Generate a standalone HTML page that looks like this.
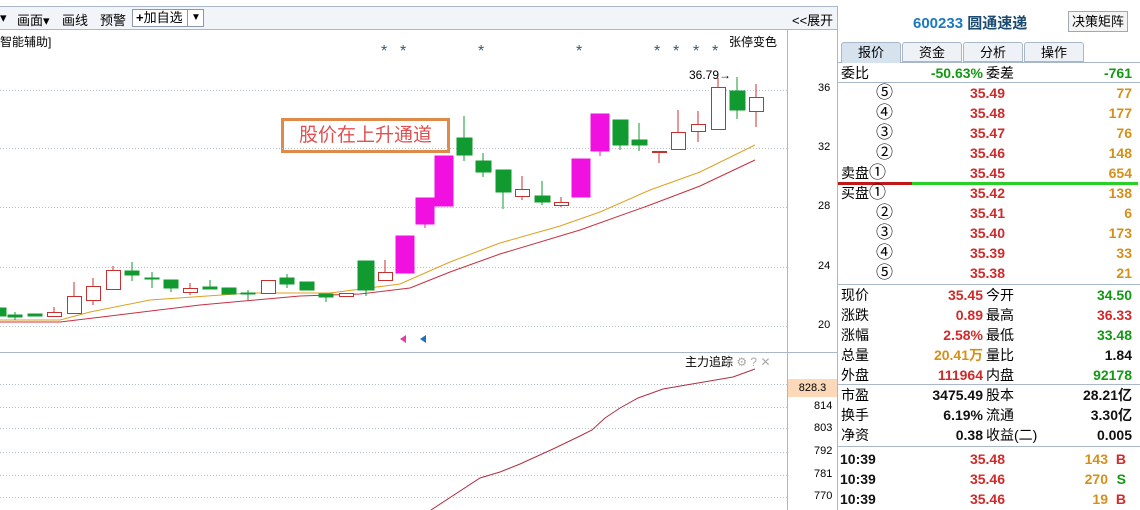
<!DOCTYPE html>
<html><head><meta charset="utf-8"><style>
*{margin:0;padding:0;box-sizing:border-box}
body{width:1140px;height:510px;overflow:hidden;background:#fff;font-family:"Liberation Sans","Noto Sans CJK SC",sans-serif;font-size:13px;color:#000;position:relative}
.a{position:absolute;white-space:nowrap}
.r{color:#d02a2a;font-weight:bold}
.g{color:#119911;font-weight:bold}
.o{color:#d4901a;font-weight:bold}
.k{color:#111;font-weight:bold}
.row{position:absolute;left:838px;width:300px;height:20px;line-height:20px;font-size:14px}
.row span{position:absolute}
.c{font-size:17px;line-height:20px}
.st{font-size:16px;color:#3a5a70}
</style></head><body>
<div class="a" style="left:0;top:6px;width:838px;height:24px;background:#f1f4f8;border-top:1px solid #a9b8c8;border-bottom:1px solid #a9b8c8"></div>
<div class="a" style="left:0;top:10px;font-size:13px">▾</div>
<div class="a" style="left:17px;top:10px;font-size:13px">画面▾</div>
<div class="a" style="left:62px;top:10px;font-size:13px">画线</div>
<div class="a" style="left:100px;top:10px;font-size:13px">预警</div>
<div class="a" style="left:132px;top:9px;width:72px;height:18px;border:1px solid #8a9aac;background:#fff;font-size:13px;line-height:16px;padding-left:3px"><b>+</b>加自选<span style="position:absolute;left:54px;top:0;height:16px;border-left:1px solid #8a9aac;width:17px;text-align:center;font-size:10px">▼</span></div>
<div class="a" style="left:792px;top:10px;font-size:13px">&lt;&lt;展开</div>
<div class="a" style="left:787px;top:30px;width:1px;height:480px;background:#a9b8c8"></div>
<div class="a" style="left:0;top:352px;width:838px;height:1px;background:#a9b8c8"></div>
<div class="a" style="left:0;top:33px;font-size:12px">智能辅助]</div>
<div class="a" style="left:729px;top:33px;font-size:12px">张停变色</div>
<div class="a st" style="left:381px;top:43px">*</div><div class="a st" style="left:400px;top:43px">*</div>
<div class="a st" style="left:478px;top:43px">*</div>
<div class="a st" style="left:576px;top:43px">*</div>
<div class="a st" style="left:654px;top:43px">*</div><div class="a st" style="left:673px;top:43px">*</div><div class="a st" style="left:693px;top:43px">*</div><div class="a st" style="left:712px;top:43px">*</div>
<div class="a" style="left:689px;top:68px;font-size:12px">36.79→</div>
<div class="a" style="left:281px;top:118px;width:169px;height:35px;border:3px solid #e08a4a;color:#e05050;font-size:19px;line-height:29px;text-align:center">股价在上升通道</div>
<div class="a" style="left:685px;top:353px;font-size:12px">主力追踪 <span style="color:#aaa">⚙ ? ✕</span></div>
<div class="a" style="left:818px;top:82px;font-size:11px">36</div>
<div class="a" style="left:818px;top:141px;font-size:11px">32</div>
<div class="a" style="left:818px;top:200px;font-size:11px">28</div>
<div class="a" style="left:818px;top:260px;font-size:11px">24</div>
<div class="a" style="left:818px;top:319px;font-size:11px">20</div>
<div class="a" style="left:788px;top:379px;width:49px;height:18px;background:#fbd9b8;font-size:11px;line-height:18px;text-align:center">828.3</div>
<div class="a" style="left:814px;top:400px;font-size:11px">814</div>
<div class="a" style="left:814px;top:422px;font-size:11px">803</div>
<div class="a" style="left:814px;top:445px;font-size:11px">792</div>
<div class="a" style="left:814px;top:468px;font-size:11px">781</div>
<div class="a" style="left:814px;top:490px;font-size:11px">770</div>
<svg class="a" style="left:0;top:0" width="838" height="510">
<g stroke="#b8c4cc" stroke-dasharray="1 2" stroke-width="1">
<line x1="0" y1="90.5" x2="787" y2="90.5"/><line x1="0" y1="148.5" x2="787" y2="148.5"/><line x1="0" y1="207.5" x2="787" y2="207.5"/><line x1="0" y1="267.5" x2="787" y2="267.5"/><line x1="0" y1="326.5" x2="787" y2="326.5"/>
<line x1="0" y1="384.5" x2="787" y2="384.5"/><line x1="0" y1="407.5" x2="787" y2="407.5"/><line x1="0" y1="428.5" x2="787" y2="428.5"/><line x1="0" y1="452.5" x2="787" y2="452.5"/><line x1="0" y1="475.5" x2="787" y2="475.5"/><line x1="0" y1="497.5" x2="787" y2="497.5"/>
</g>
<polyline fill="none" stroke="#e0a020" stroke-width="1" points="0,320 60,320 90,312 150,300 250,293 330,293 400,284 450,262 500,243 560,226 600,212 650,190 700,172 755,145"/>
<polyline fill="none" stroke="#c83040" stroke-width="1" points="0,322 60,322 110,316 200,305 300,296 360,294 410,288 450,272 500,254 580,230 650,205 700,186 755,160"/>
<polyline fill="none" stroke="#b03040" stroke-width="1" points="431,510 480,478 500,472 520,464 553,449 580,436 592,430 605,418 620,408 638,398 663,389 692,384 733,377 755,369"/>
<g stroke-width="1">
<g fill="#109a30" stroke="#109a30">
<rect x="-4" y="308" width="10" height="8"/>
<line x1="15" y1="312" x2="15" y2="320"/><rect x="8" y="315" width="14" height="2"/>
<rect x="28" y="314" width="14" height="2"/>
<line x1="132" y1="262" x2="132" y2="281"/><rect x="125" y="271" width="14" height="4"/>
<line x1="152" y1="272" x2="152" y2="288"/><rect x="145" y="278" width="14" height="1"/>
<line x1="171" y1="280" x2="171" y2="292"/><rect x="164" y="280" width="14" height="8"/>
<line x1="210" y1="280" x2="210" y2="289"/><rect x="203" y="287" width="14" height="2"/>
<rect x="222" y="288" width="14" height="6"/>
<line x1="248" y1="290" x2="248" y2="300"/><rect x="241" y="293" width="14" height="1"/>
<line x1="287" y1="274" x2="287" y2="288"/><rect x="280" y="278" width="14" height="6"/>
<rect x="300" y="282" width="14" height="8"/>
<line x1="326" y1="295" x2="326" y2="302"/><rect x="319" y="294" width="14" height="3"/>
<line x1="366" y1="290" x2="366" y2="296"/><rect x="358" y="261" width="16" height="29"/>
<line x1="464" y1="116" x2="464" y2="161"/><rect x="457" y="138" width="15" height="17"/>
<line x1="483" y1="153" x2="483" y2="177"/><rect x="476" y="161" width="15" height="11"/>
<line x1="503" y1="170" x2="503" y2="209"/><rect x="496" y="170" width="15" height="22"/>
<line x1="542" y1="181" x2="542" y2="205"/><rect x="535" y="196" width="15" height="6"/>
<line x1="620" y1="120" x2="620" y2="150"/><rect x="613" y="120" width="15" height="25"/>
<line x1="639" y1="123" x2="639" y2="151"/><rect x="632" y="140" width="15" height="5"/>
<line x1="737" y1="77" x2="737" y2="119"/><rect x="730" y="91" width="15" height="19"/>
</g>
<g fill="#f010e0" stroke="#f010e0">
<rect x="396" y="236" width="18" height="37"/>
<line x1="425" y1="224" x2="425" y2="228"/><rect x="416" y="198" width="18" height="26"/>
<rect x="435" y="156" width="18" height="50"/>
<rect x="572" y="159" width="18" height="38"/>
<line x1="600" y1="151" x2="600" y2="156"/><rect x="591" y="114" width="18" height="37"/>
</g>
<g fill="#fff" stroke="#c83030">
<line x1="54" y1="307" x2="54" y2="312"/><rect x="47.5" y="312.5" width="14" height="4"/>
<line x1="74" y1="282" x2="74" y2="296"/><rect x="67.5" y="296.5" width="14" height="17"/>
<line x1="93" y1="278" x2="93" y2="286"/><line x1="93" y1="300" x2="93" y2="305"/><rect x="86.5" y="286.5" width="14" height="14"/>
<line x1="113" y1="266" x2="113" y2="270"/><rect x="106.5" y="270.5" width="14" height="19"/>
<line x1="190" y1="283" x2="190" y2="295"/><rect x="183.5" y="288.5" width="14" height="4"/>
<rect x="261.5" y="280.5" width="14" height="13"/>
<rect x="339.5" y="293.5" width="14" height="3"/>
<line x1="385" y1="260" x2="385" y2="272"/><rect x="378.5" y="272.5" width="14" height="8"/>
<line x1="522" y1="176" x2="522" y2="200"/><rect x="515.5" y="189.5" width="14" height="7"/>
<line x1="561" y1="197" x2="561" y2="207"/><rect x="554.5" y="202.5" width="14" height="3"/>
<line x1="659" y1="152" x2="659" y2="163"/><rect x="652.5" y="151.5" width="14" height="1"/>
<line x1="678" y1="110" x2="678" y2="132"/><rect x="671.5" y="132.5" width="14" height="17"/>
<line x1="698" y1="111" x2="698" y2="142"/><rect x="691.5" y="124.5" width="14" height="7"/>
<line x1="718" y1="78" x2="718" y2="87"/><rect x="711.5" y="87.5" width="14" height="42"/>
<line x1="756" y1="84" x2="756" y2="127"/><rect x="749.5" y="97.5" width="14" height="14"/>
</g>
</g>
<polygon points="400,339 406,335 406,343" fill="#e040a0"/>
<polygon points="420,339 426,335 426,343" fill="#2070c0"/>
</svg>
<div class="a" style="left:837px;top:6px;width:1px;height:504px;background:#a9b8c8"></div>
<div class="a" style="left:913px;top:12px;font-size:15px;font-weight:bold;color:#1a7ac0">600233 <span style="color:#1a4a70">圆通速递</span></div>
<div class="a" style="left:1068px;top:11px;width:60px;height:21px;border:1px solid #a0a8b0;background:#f4f4f4;font-size:13px;line-height:19px;text-align:center">决策矩阵</div>
<div class="a" style="left:838px;top:62px;width:302px;height:1px;background:#a9b8c8"></div>
<div class="a" style="left:841px;top:42px;width:60px;height:21px;background:#d6e2ee;border:1px solid #a9b8c8;border-bottom:none;border-radius:3px 3px 0 0;text-align:center;line-height:20px;font-size:13px">报价</div>
<div class="a" style="left:902px;top:42px;width:60px;height:20px;background:#eef2f6;border:1px solid #a9b8c8;border-radius:3px 3px 0 0;text-align:center;line-height:19px;font-size:13px">资金</div>
<div class="a" style="left:963px;top:42px;width:60px;height:20px;background:#eef2f6;border:1px solid #a9b8c8;border-radius:3px 3px 0 0;text-align:center;line-height:19px;font-size:13px">分析</div>
<div class="a" style="left:1024px;top:42px;width:60px;height:20px;background:#eef2f6;border:1px solid #a9b8c8;border-radius:3px 3px 0 0;text-align:center;line-height:19px;font-size:13px">操作</div>
<div class="row" style="top:63px"><span style="left:3px">委比</span><span class="g" style="right:155px">-50.63%</span><span style="left:148px">委差</span><span class="g" style="right:6px">-761</span></div>
<div class="a" style="left:838px;top:82px;width:302px;height:1px;background:#a9b8c8"></div>
<div class="row" style="top:83px"><span class="c" style="left:38px">⑤</span><span class="r" style="right:133px">35.49</span><span class="o" style="right:6px">77</span></div>
<div class="row" style="top:103px"><span class="c" style="left:38px">④</span><span class="r" style="right:133px">35.48</span><span class="o" style="right:6px">177</span></div>
<div class="row" style="top:123px"><span class="c" style="left:38px">③</span><span class="r" style="right:133px">35.47</span><span class="o" style="right:6px">76</span></div>
<div class="row" style="top:143px"><span class="c" style="left:38px">②</span><span class="r" style="right:133px">35.46</span><span class="o" style="right:6px">148</span></div>
<div class="row" style="top:163px"><span style="left:3px">卖盘<span class="c">①</span></span><span class="r" style="right:133px">35.45</span><span class="o" style="right:6px">654</span></div>
<div class="a" style="left:838px;top:182px;width:74px;height:3px;background:#c01818"></div>
<div class="a" style="left:912px;top:182px;width:226px;height:3px;background:#28d028"></div>
<div class="row" style="top:183px"><span style="left:3px">买盘<span class="c">①</span></span><span class="r" style="right:133px">35.42</span><span class="o" style="right:6px">138</span></div>
<div class="row" style="top:203px"><span class="c" style="left:38px">②</span><span class="r" style="right:133px">35.41</span><span class="o" style="right:6px">6</span></div>
<div class="row" style="top:223px"><span class="c" style="left:38px">③</span><span class="r" style="right:133px">35.40</span><span class="o" style="right:6px">173</span></div>
<div class="row" style="top:243px"><span class="c" style="left:38px">④</span><span class="r" style="right:133px">35.39</span><span class="o" style="right:6px">33</span></div>
<div class="row" style="top:263px"><span class="c" style="left:38px">⑤</span><span class="r" style="right:133px">35.38</span><span class="o" style="right:6px">21</span></div>
<div class="a" style="left:838px;top:284px;width:302px;height:1px;background:#a9b8c8"></div>
<div class="row" style="top:285px"><span style="left:3px">现价</span><span class="r" style="right:155px">35.45</span><span style="left:148px">今开</span><span class="g" style="right:6px">34.50</span></div>
<div class="row" style="top:305px"><span style="left:3px">涨跌</span><span class="r" style="right:155px">0.89</span><span style="left:148px">最高</span><span class="r" style="right:6px">36.33</span></div>
<div class="row" style="top:325px"><span style="left:3px">涨幅</span><span class="r" style="right:155px">2.58%</span><span style="left:148px">最低</span><span class="g" style="right:6px">33.48</span></div>
<div class="row" style="top:345px"><span style="left:3px">总量</span><span class="o" style="right:155px">20.41万</span><span style="left:148px">量比</span><span class="k" style="right:6px">1.84</span></div>
<div class="row" style="top:365px"><span style="left:3px">外盘</span><span class="r" style="right:155px">111964</span><span style="left:148px">内盘</span><span class="g" style="right:6px">92178</span></div>
<div class="a" style="left:838px;top:384px;width:302px;height:1px;background:#a9b8c8"></div>
<div class="row" style="top:385px"><span style="left:3px">市盈</span><span class="k" style="right:155px">3475.49</span><span style="left:148px">股本</span><span class="k" style="right:6px">28.21亿</span></div>
<div class="row" style="top:405px"><span style="left:3px">换手</span><span class="k" style="right:155px">6.19%</span><span style="left:148px">流通</span><span class="k" style="right:6px">3.30亿</span></div>
<div class="row" style="top:425px"><span style="left:3px">净资</span><span class="k" style="right:155px">0.38</span><span style="left:148px">收益(二)</span><span class="k" style="right:6px">0.005</span></div>
<div class="a" style="left:838px;top:446px;width:302px;height:1px;background:#a9b8c8"></div>
<div class="row" style="top:449px"><span class="k" style="left:2px">10:39</span><span class="r" style="right:133px">35.48</span><span class="o" style="right:30px">143</span><span class="r" style="right:12px">B</span></div>
<div class="row" style="top:469px"><span class="k" style="left:2px">10:39</span><span class="r" style="right:133px">35.46</span><span class="o" style="right:30px">270</span><span class="g" style="right:12px">S</span></div>
<div class="row" style="top:489px"><span class="k" style="left:2px">10:39</span><span class="r" style="right:133px">35.46</span><span class="o" style="right:30px">19</span><span class="r" style="right:12px">B</span></div>
</body></html>
